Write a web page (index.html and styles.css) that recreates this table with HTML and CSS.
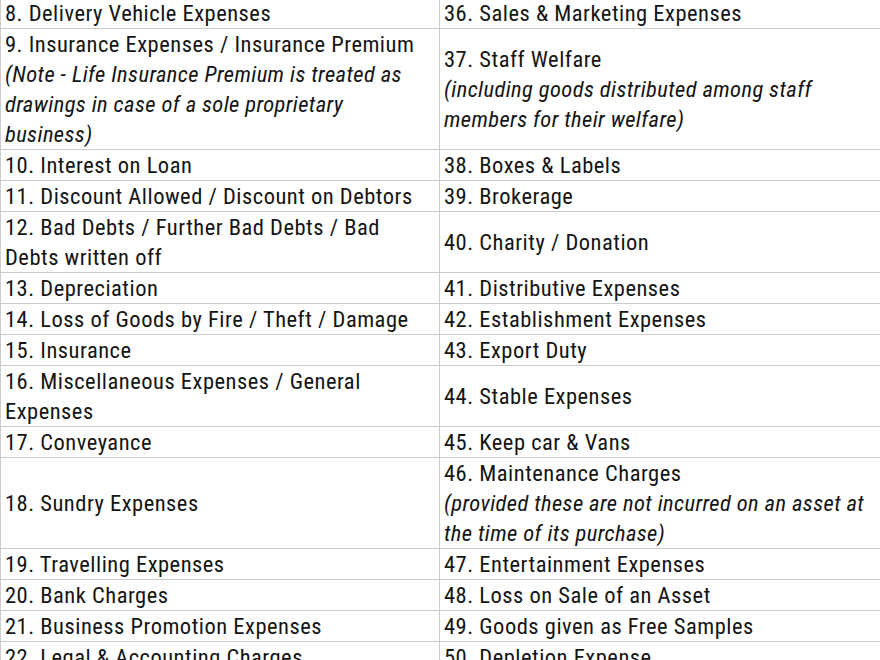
FILE: index.html
```html
<!DOCTYPE html>
<html lang="en">
<head>
<meta charset="utf-8">
<title>Expenses</title>
<link rel="stylesheet" href="styles.css">
</head>
<body>
<table class="sheet">
  <colgroup><col class="col-left"><col class="col-right"></colgroup>
  <tbody>
    <tr><td>8. Delivery Vehicle Expenses</td><td>36. Sales &amp; Marketing Expenses</td></tr>
    <tr>
      <td>9. Insurance Expenses / Insurance Premium<br><span class="note">(Note - Life Insurance Premium is treated as<br>drawings in case of a sole proprietary<br>business)</span></td>
      <td>37. Staff Welfare<br><span class="note">(including goods distributed among staff<br>members for their welfare)</span></td>
    </tr>
    <tr><td>10. Interest on Loan</td><td>38. Boxes &amp; Labels</td></tr>
    <tr><td>11. Discount Allowed / Discount on Debtors</td><td>39. Brokerage</td></tr>
    <tr><td>12. Bad Debts / Further Bad Debts / Bad Debts written off</td><td>40. Charity / Donation</td></tr>
    <tr><td>13. Depreciation</td><td>41. Distributive Expenses</td></tr>
    <tr><td>14. Loss of Goods by Fire / Theft / Damage</td><td>42. Establishment Expenses</td></tr>
    <tr><td>15. Insurance</td><td>43. Export Duty</td></tr>
    <tr><td>16. Miscellaneous Expenses / General Expenses</td><td>44. Stable Expenses</td></tr>
    <tr><td>17. Conveyance</td><td>45. Keep car &amp; Vans</td></tr>
    <tr>
      <td>18. Sundry Expenses</td>
      <td>46. Maintenance Charges<br><span class="note">(provided these are not incurred on an asset at<br>the time of its purchase)</span></td>
    </tr>
    <tr><td>19. Travelling Expenses</td><td>47. Entertainment Expenses</td></tr>
    <tr><td>20. Bank Charges</td><td>48. Loss on Sale of an Asset</td></tr>
    <tr><td>21. Business Promotion Expenses</td><td>49. Goods given as Free Samples</td></tr>
    <tr><td>22. Legal &amp; Accounting Charges</td><td>50. Depletion Expense</td></tr>
  </tbody>
</table>
</body>
</html>
```

FILE: styles.css
```css
html, body {
  margin: 0;
  padding: 0;
  background: #ffffff;
}

body {
  overflow: hidden;
}

.sheet {
  width: 880px;
  margin-top: -3px;
  border-collapse: collapse;
  table-layout: fixed;
  font-family: "Roboto", "Liberation Sans", sans-serif;
  font-stretch: 75%;
  font-size: 22.5px;
  letter-spacing: 0.5px;
  line-height: 30px;
  color: #141414;
}

.col-left {
  width: 439px;
}

.col-right {
  width: 441px;
}

.sheet td {
  border: 1px solid #cccccc;
  padding: 0 4px;
  vertical-align: middle;
  text-align: left;
}

.note {
  font-style: italic;
  letter-spacing: 0.4px;
}
```
